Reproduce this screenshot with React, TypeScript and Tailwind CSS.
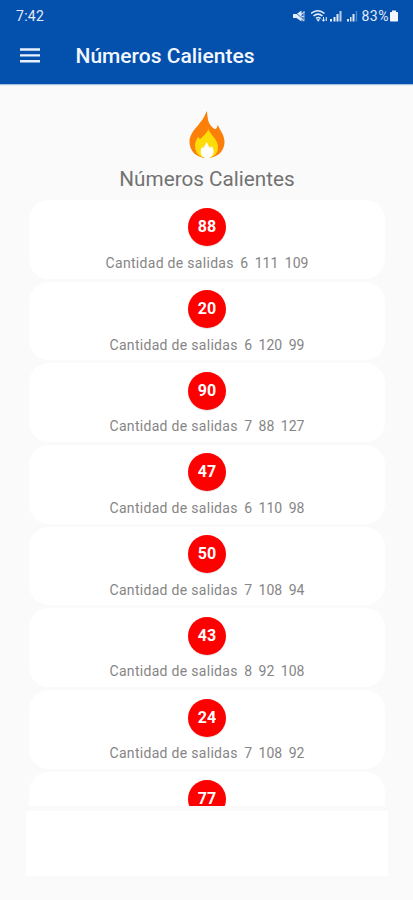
import type { ReactNode } from "react";

type HotNumber = {
  value: string;
  counts: string[];
};

const hotNumbers: HotNumber[] = [
  { value: "88", counts: ["6", "111", "109"] },
  { value: "20", counts: ["6", "120", "99"] },
  { value: "90", counts: ["7", "88", "127"] },
  { value: "47", counts: ["6", "110", "98"] },
  { value: "50", counts: ["7", "108", "94"] },
  { value: "43", counts: ["8", "92", "108"] },
  { value: "24", counts: ["7", "108", "92"] },
];

function StatusIcon({ width, children }: { width: number; children: ReactNode }) {
  return (
    <svg width={width} height="14" viewBox={`0 0 ${width} 14`} fill="none" className="block shrink-0">
      {children}
    </svg>
  );
}

function StatusBar() {
  return (
    <div className="flex h-8 items-center justify-between pl-4 pr-[14px] text-[#e3ecfa]">
      <span className="text-[14px] leading-none tracking-[0.3px]">7:42</span>
      <div className="flex items-center">
        <StatusIcon width={13}>
          <path d="M0 5h3.500l5-3.500v11L3.500 9H0z" fill="#e3ecfa" />
          <path d="M1.500 2.500l10 9" stroke="#0350ad" strokeWidth="0.8" />
          <path d="M8 5.500l3.500-2.500M8.500 7.500H11M8 9l3 3" stroke="#cfdef3" strokeWidth="1.300" />
          <path d="M11 2v10" stroke="#9dbde6" strokeWidth="1" />
        </StatusIcon>
        <div className="w-[5px]" />
        <StatusIcon width={17}>
          <path d="M0 4.500c4-3.700 9.500-3.700 13.500 0M2.500 7c3-2.600 6-2.600 9 0M5 9.400c1.600-1.300 3-1.300 4.600 0" stroke="#e3ecfa" strokeWidth="1.600" />
          <path d="M5.200 10.300h4l-2 2.400z" fill="#e3ecfa" />
          <path d="M12.500 8v4M11 10.500l1.500 1.800 1.500-1.800M15.300 8v4" stroke="#e3ecfa" strokeWidth="1" />
        </StatusIcon>
        <div className="w-[2px]" />
        <StatusIcon width={13}>
          <path d="M0 10h2v2.500H0zM3.500 8h2v4.500h-2zM6.500 5h2v7.500h-2z" fill="#e3ecfa" />
          <path d="M9.500 2h2v10.500h-2z" fill="#b9cfec" />
        </StatusIcon>
        <div className="w-[3px]" />
        <StatusIcon width={12}>
          <path d="M1 10h2v2.500H1zM4 8h1.500v4.500H4zM6.500 5h2v7.500h-2z" fill="#dce8f8" />
          <path d="M9.700 2h1.500v10.500H9.700z" fill="#4d86ca" />
        </StatusIcon>
        <span className="ml-1 text-[14px] leading-none tracking-[0.5px]">83%</span>
        <StatusIcon width={10}>
          <path d="M3 1.500h4V3h1.300c.4 0 .7.300.7.700v8.100c0 .4-.3.700-.7.700H1.700c-.4 0-.7-.3-.7-.7V3.700c0-.4.300-.7.700-.7H3z" fill="#f2f7ff" />
        </StatusIcon>
      </div>
    </div>
  );
}

function Flame() {
  return (
    <svg width="38" height="50" viewBox="0 0 38 50" className="block">
      <path
        d="M18.500 1C20 5 19 10 22 14.500C24 17.500 26.500 19.500 27.500 19C29 18.500 29.500 16.500 29.700 14.500C31.500 20 36.500 24.500 36.500 32C36.500 41 29.500 48 19 48C8.500 48 1.500 41 1.500 32C1.500 20 15 14 18.500 1Z"
        fill="#fb7f08"
      />
      <path
        d="M20.500 19C21.500 24.500 29.500 28 30 37C30.300 43.500 25.500 48 19 48C11.500 48 7 43 7 35.500C7 32 8.500 29 10.500 26.500C11 29 12 29.500 13.300 28C16 25 18.500 23.500 20.500 19Z"
        fill="#fddc08"
      />
      <path
        d="M18.500 32C20 33.500 20 36 22 37.500C23 38 23.300 37 23.700 36C25 38 26 40 25.500 42.500C25 46 22.500 48 19 48C15 48 12.700 45.500 12.700 42C12.700 40 13 38.500 14 37C14.500 38.500 15.500 38 16.200 36.500C17 35 17.800 34 18.500 32Z"
        fill="#fffffb"
      />
    </svg>
  );
}

function Ball({ value }: { value: string }) {
  return (
    <div className="flex size-[38px] shrink-0 items-center justify-center rounded-full bg-[#fe0000] text-[16px] font-bold leading-none text-white shadow-[0_1px_1px_rgba(0,0,0,0.12)]">
      {value}
    </div>
  );
}

function NumberCard({ item }: { item: HotNumber }) {
  return (
    <div className="flex h-[78.700px] shrink-0 flex-col items-center rounded-[20px] bg-white pt-[8.400px]">
      <Ball value={item.value} />
      <p className="mt-[7.500px] flex gap-[6.500px] text-[14px] leading-[18px] text-[#858585]">
        <span className="tracking-[0.300px]">Cantidad de salidas</span>
        {item.counts.map((count, i) => (
          <span key={i}>{count}</span>
        ))}
      </p>
    </div>
  );
}

export default function App() {
  return (
    <div className="flex h-[900px] w-full flex-col overflow-hidden bg-[#fafafa] font-['Roboto',sans-serif]">
      <header className="h-[84px] shrink-0 bg-[#0350ad] shadow-[0_1px_1px_rgba(3,80,173,0.35)]">
        <StatusBar />
        <div className="flex h-12 items-center pl-5">
          <button type="button" aria-label="Menu" className="mb-px">
            <svg width="20" height="15" viewBox="0 0 20 15" className="block">
              <path d="M0 0.300h20v2.400H0zM0 6.200h20v2.400H0zM0 12.100h20v2.400H0z" fill="#e8f1ff" />
            </svg>
          </button>
          <h1 className="ml-[35.500px] text-[21px] font-medium leading-none text-[#f3f8ff]">Números Calientes</h1>
        </div>
      </header>

      <main className="flex flex-col pl-[26px] pr-[25px]">
        <div className="flex h-[116px] shrink-0 flex-col items-center pt-[26px]">
          <Flame />
          <h2 className="mt-[6px] text-[20.700px] leading-[26px] text-[#727272]">Números Calientes</h2>
        </div>
        <div className="flex h-[606px] shrink-0 flex-col gap-[3px] overflow-hidden px-[3px]">
          {hotNumbers.map((item) => (
            <NumberCard key={item.value} item={item} />
          ))}
          <div className="flex h-[78.700px] shrink-0 flex-col items-center rounded-[20px] bg-white pt-[8.400px]">
            <Ball value="77" />
          </div>
        </div>
        <div className="mt-[5px] h-[65px] shrink-0 bg-white" />
      </main>
    </div>
  );
}
